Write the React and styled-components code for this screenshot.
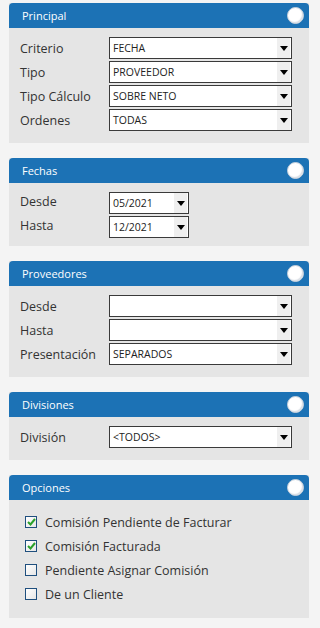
import React from 'react';
import styled, { createGlobalStyle } from 'styled-components';

const Global = createGlobalStyle`
  html, body { margin: 0; padding: 0; background: #f4f4f4; }
  body { font-family: "Open Sans", "DejaVu Sans", sans-serif; }
`;

const Page = styled.div`
  width: 320px;
  padding: 3px 11px 0 9px;
  box-sizing: border-box;
  display: flex;
  flex-direction: column;
  gap: 15px;
`;

const Panel = styled.section`
  width: 300px;
  background: #e5e5e5;
`;

const Header = styled.div`
  height: 25px;
  background: #1c72b5;
  border-radius: 4px 4px 0 0;
  display: flex;
  align-items: center;
  justify-content: space-between;
  padding: 0 5px 0 13px;
  color: #fff;
  font-size: 11px;
`;

const Knob = styled.span`
  width: 15px;
  height: 15px;
  border-radius: 50%;
  background: #fff;
  border: 1px solid #c4cfdb;
  box-shadow: inset -1px -1px 1px #d8dde4;
`;

const Body = styled.div`
  padding: ${p => p.$pad || '9px 0 12px 11px'};
  display: flex;
  flex-direction: column;
  gap: 2px;
`;

const Row = styled.div`
  display: flex;
  align-items: center;
  height: 22px;
`;

const Label = styled.div`
  width: 89px;
  font-size: 12.5px;
  color: #333;
  margin-top: ${p => p.$up ? '-4px' : '0'};
`;

const Select = styled.div`
  width: ${p => p.$w || 183}px;
  height: 22px;
  box-sizing: border-box;
  border: 1px solid #3a3a3a;
  background: #fff;
  display: flex;
  align-items: center;
`;

const Value = styled.span`
  flex: 1;
  padding-left: 3px;
  font-size: 10.5px;
  color: #222;
  white-space: nowrap;
`;

const Arrow = styled.span`
  width: 13px;
  height: 20px;
  margin-right: 1px;
  background: #efefef;
  display: flex;
  align-items: center;
  justify-content: center;
  &::after {
    content: '';
    border-left: 4px solid transparent;
    border-right: 4px solid transparent;
    border-top: 5px solid #000;
  }
`;

const Check = styled.div`
  display: flex;
  align-items: center;
  height: 22px;
  gap: 8px;
  font-size: 12.5px;
  color: #333;
`;

const Box = styled.span`
  width: 10px;
  height: 10px;
  border: 1px solid #1f4f7e;
  background: linear-gradient(135deg, #fff, #e6e6e6);
  display: flex;
  align-items: center;
  justify-content: center;
`;

const Dropdown = ({ value, w }) => (
  <Select $w={w}>
    <Value>{value}</Value>
    <Arrow />
  </Select>
);

const Block = ({ title, children, pad }) => (
  <Panel>
    <Header>
      <span>{title}</span>
      <Knob />
    </Header>
    <Body $pad={pad}>{children}</Body>
  </Panel>
);

const Field = ({ label, value, w, up }) => (
  <Row>
    <Label $up={up}>{label}</Label>
    <Dropdown value={value} w={w} />
  </Row>
);

const Option = ({ text, on }) => (
  <Check>
    <Box>
      {on && (
        <svg width="9" height="8" viewBox="0 0 9 8">
          <path d="M1 4 L3.5 6.5 L8 1" stroke="#2aa12a" strokeWidth="2" fill="none" />
        </svg>
      )}
    </Box>
    <span>{text}</span>
  </Check>
);

export default function App() {
  return (
    <Page>
      <Global />
      <Block title="Principal">
        <Field label="Criterio" value="FECHA" />
        <Field label="Tipo" value="PROVEEDOR" />
        <Field label="Tipo Cálculo" value="SOBRE NETO" />
        <Field label="Ordenes" value="TODAS" />
      </Block>
      <Block title="Fechas" pad="9px 0 8px 11px">
        <Field label="Desde" value="05/2021" w={80} up />
        <Field label="Hasta" value="12/2021" w={80} up />
      </Block>
      <Block title="Proveedores">
        <Field label="Desde" value="" />
        <Field label="Hasta" value="" />
        <Field label="Presentación" value="SEPARADOS" />
      </Block>
      <Block title="Divisiones" pad="9px 0 12px 11px">
        <Field label="División" value="<TODOS>" />
      </Block>
      <Block title="Opciones" pad="11px 0 13px 16px">
        <Option text="Comisión Pendiente de Facturar" on />
        <Option text="Comisión Facturada" on />
        <Option text="Pendiente Asignar Comisión" />
        <Option text="De un Cliente" />
      </Block>
    </Page>
  );
}
